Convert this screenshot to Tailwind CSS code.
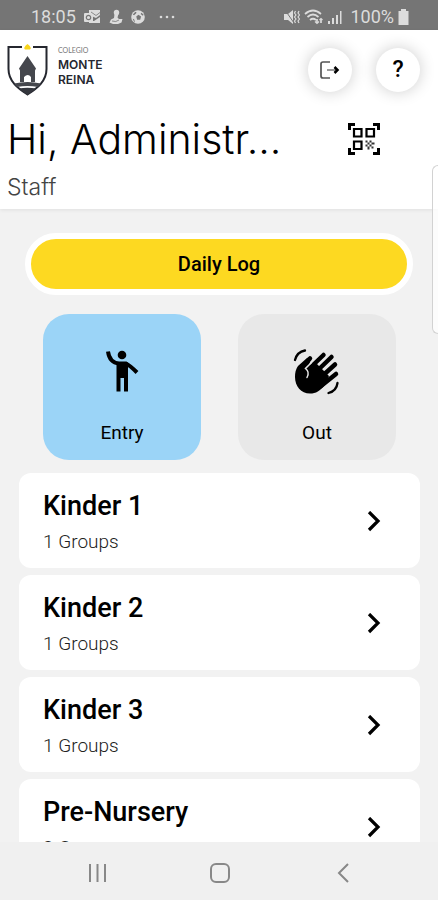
<!DOCTYPE html>
<html lang="en">
<head>
<meta charset="utf-8">
<meta name="viewport" content="width=device-width, initial-scale=1">
<title>Colegio Monte Reina</title>
<script src="https://cdn.jsdelivr.net/npm/@tailwindcss/browser@4"></script>
</head>
<body class="relative flex h-screen flex-col overflow-hidden bg-[#f2f2f2] font-[Roboto,sans-serif] text-black">
  <!-- System status bar -->
  <div class="flex h-[30px] shrink-0 items-center justify-between bg-[#757575] pt-[3px] pr-7 pl-[31px] text-lg leading-6 text-[#dcdcdc]">
    <div class="flex items-center gap-2">
      <span>18:05</span>
      <svg class="h-4 w-[17px]" viewBox="0 0 17 16" fill="currentColor" aria-hidden="true"><path d="M5 1h11v5l-4 3-7-3z"/><path d="M16 8v6H5v-2h5z"/><rect y="4" width="9" height="9" rx="1"/><circle cx="4.500" cy="8.500" r="2.200" fill="none" stroke="#757575" stroke-width="1.200"/><path d="M7 3l5 3.500 4-3" fill="none" stroke="#757575" stroke-width=".8"/></svg>
      <svg class="h-4 w-[14px]" viewBox="0 0 14 16" fill="currentColor" aria-hidden="true"><circle cx="7.500" cy="3.500" r="2.700"/><path d="M5.500 5h4L8.500 8.500 10 10h3.500l-1 3.500L9 15H4l-3.500-1.500L2 10.500 5 9z"/><path d="M3 12q4 1.500 7-1" fill="none" stroke="#757575" stroke-width=".8"/></svg>
      <svg class="size-[14px]" viewBox="0 0 16 16" aria-hidden="true"><circle cx="8" cy="8" r="7.800" fill="currentColor"/><path d="M8.500 5.500l3 2-1 3.500H7L6 7.500zM2 5l3-3 1.500 1-3 3zM12 3l2.500 2.500-1 1L11 4.500zM2 10l1.500.5 1 3-1 0z" fill="#757575"/></svg>
      <svg class="ml-[6px] h-4 w-4" viewBox="0 0 16 16" fill="currentColor" aria-hidden="true"><circle cx="2" cy="8" r="1.300"/><circle cx="8" cy="8" r="1.300"/><circle cx="14" cy="8" r="1.300"/></svg>
    </div>
    <div class="flex items-center gap-1">
      <svg class="h-4 w-4" viewBox="0 0 16 16" fill="currentColor" aria-hidden="true"><path d="M0 5h4l5-4v14l-5-4H0z"/><path d="M1 1l9 13" stroke="#757575" stroke-width="1"/><path d="M11.500 2l-1 2 1.500 2-1.500 2 1.500 2-1.500 2 1 2M15 2l-1 2 1.500 2L14 8l1.500 2-1.500 2 1 2" fill="none" stroke="currentColor" stroke-width="1.200"/></svg>
      <svg class="h-4 w-5" viewBox="0 0 20 16" fill="none" stroke="currentColor" stroke-width="1.700" aria-hidden="true"><path d="M1 5q8-7 16 0M3.500 8q5.500-5 11 0M6 11q3-2.500 6 0"/><path d="M13 10v4M17 14v-4"/><path d="M11 12.500l2 2 2-2M15.500 11l1.500-1.500 1.500 1.500" stroke-width="1.200"/></svg>
      <svg class="h-4 w-[14px]" viewBox="0 0 14 16" fill="currentColor" aria-hidden="true"><path d="M0 12h2v3H0zM4 9h2v6H4zM8 6h2v9H8zM12 2h1.500v13H12z"/></svg>
      <span class="ml-1">100%</span>
      <svg class="h-4 w-3" viewBox="0 0 12 16" fill="currentColor" aria-hidden="true"><path d="M3 0h5v2h2.500v14H.5V2H3z"/></svg>
    </div>
  </div>

  <header class="shrink-0 bg-white shadow-[0_1px_4px_rgba(0,0,0,0.08)]">
    <div class="flex h-20 items-center justify-between pr-[18px] pl-[7px]">
      <div class="flex items-start gap-[10px]">
        <svg class="h-[53px] w-[41px]" viewBox="0 0 41 53" aria-hidden="true"><path d="M15 3H1.500v22c0 12 9 19 19 25.500C30.500 44 39.500 37 39.500 25V3H26" fill="none" stroke="#25272f" stroke-width="2"/><path d="M20.500 0q5 4 2.500 5.500h-5q-2.500-1.500 2.500-5.500z" fill="#f8d51c"/><path d="M20.500 12l8.500 12.500-1 2V38h-4v-5q-3-4-7 0v5h-4V26.500l-1-2z" fill="#45474d"/><path d="M7 39.500q13.500-3 27 0l-3 3.500q-10.500-2-21 0z" fill="#45474d"/><path d="M11.500 44.500q9-1.500 18 0l-9 6.500z" fill="#34363d"/></svg>
        <div>
          <div class="font-[Lato,sans-serif] text-[7px] leading-[13px] text-[#777]">COLEGIO</div>
          <div class="font-[Inter,sans-serif] text-xs leading-[15px] font-semibold text-[#25272f]">MONTE<br>REINA</div>
        </div>
      </div>
      <div class="flex gap-6">
        <button aria-label="Log out" class="flex size-11 items-center justify-center rounded-full bg-white shadow-[0_0_16px_rgba(0,0,0,0.2)]">
          <svg class="h-[18px] w-5" viewBox="0 0 20 18" fill="none" stroke="#555" stroke-width="1.700" aria-hidden="true"><path d="M10 1H3Q1 1 1 3v12q0 2 2 2h7"/><path d="M7 9h11" stroke="#888"/><path d="M14.500 6L17.500 9l-3 3" stroke="#000" stroke-width="2.500"/></svg>
        </button>
        <button aria-label="Help" class="flex size-11 items-center justify-center rounded-full bg-white text-[23px] font-medium shadow-[0_0_16px_rgba(0,0,0,0.2)]">?</button>
      </div>
    </div>
    <div class="flex items-center pt-[2px] pr-[57px] pl-[7px]">
      <h1 class="min-w-0 flex-1 font-[Inter,sans-serif] text-[41px] leading-[54px] font-light whitespace-nowrap">Hi, Administr...</h1>
      <button aria-label="Scan QR code">
        <svg class="size-[34px]" viewBox="0 0 34 34" fill="none" stroke="#000" aria-hidden="true"><path d="M2.500 8V2.500H8M26 2.500h5.500V8M31.500 26v5.500H26M8 31.500H2.500V26" stroke-width="3"/><path d="M7 7h7.500v7.500H7zM19.500 7H27v7.500h-7.500zM7 19.500h7.500V27H7z" stroke-width="2.200"/><path d="M18.500 18.500h2v2h-2zM22.500 18.500h2v2h-2zM20.500 20.500h2v2h-2zM24.500 20.500h3v2h-3zM18.500 22.500h2v2h-2zM22.500 22.500h2v2h-2zM20.500 24.500h2v3h-2zM24.500 24.500h2v2h-2z" fill="#333" stroke="none"/></svg>
      </button>
    </div>
    <p class="pt-[9px] pb-[10px] pl-[7px] font-[Inter,sans-serif] text-[23px] leading-6 font-light text-[#444]">Staff</p>
  </header>

  <main class="min-h-0 flex-1 overflow-hidden">
    <div class="pt-6 pr-[25px] pl-[25px]">
      <button class="h-[62px] w-full rounded-full border-[6px] border-white bg-[#fdd921] text-xl font-medium">Daily Log</button>
    </div>
    <div class="grid grid-cols-2 gap-[37px] pt-[19px] pr-[42px] pb-[13px] pl-[43px]">
      <button class="flex h-[146px] flex-col items-center rounded-[26px] bg-[#9bd4f7] pt-[34px] text-[19px] leading-6">
        <svg class="size-12" viewBox="0 0 48 48" aria-hidden="true"><circle cx="24" cy="7" r="4.300"/><path d="M10 3.500C11 11 15 15 21 15.500h7q4 2 11 9" fill="none" stroke="#000" stroke-width="4"/><path d="M18.500 14.500h11.500v29h-4V30h-3.500v13.500h-4z"/></svg>
        <span class="mt-[25px]">Entry</span>
      </button>
      <button class="flex h-[146px] flex-col items-center rounded-[26px] bg-[#e8e8e8] pt-[34px] text-[19px] leading-6">
        <svg class="size-12" viewBox="0 0 48 48" fill="none" stroke="#000" stroke-linecap="round" aria-hidden="true"><path d="M5 18l9-8q4-2 4 1l-2 6 8-1 12 12-4 9c-5 6-9 8.500-15 8.500C8 45.500 2 38 2 29q0-7 3-11z" fill="#000" stroke="none"/><path d="M17 10.500L8 20M30.500 7L18 19M38.500 9L22 25M42 16.500L26 31M43 26L28 38" stroke-width="4.500"/><path d="M18 15l-5.500 5.500q4.500 3.500 1.500 9" stroke="#e8e8e8" stroke-width="1.500"/><path d="M2 12Q4 4 12 2.500M35.500 45q8-2 9-10" stroke-width="2.300"/></svg>
        <span class="mt-[25px]">Out</span>
      </button>
    </div>
    <ul class="flex flex-col gap-[7px] pr-[18px] pl-[19px]">
      <li><a href="#kinder-1" class="flex items-center justify-between rounded-xl bg-white pt-4 pr-[38px] pb-[14px] pl-6">
        <div><h2 class="text-[27px] leading-[34px] font-medium">Kinder 1</h2><p class="mt-[7px] text-[19px] leading-6 font-light text-[#222]">1 Groups</p></div>
        <svg class="h-[22px] w-4" viewBox="0 0 16 22" fill="none" stroke="#000" stroke-width="3.200" aria-hidden="true"><path d="M3 1l9 9-9 9"/></svg>
      </a></li>
      <li><a href="#kinder-2" class="flex items-center justify-between rounded-xl bg-white pt-4 pr-[38px] pb-[14px] pl-6">
        <div><h2 class="text-[27px] leading-[34px] font-medium">Kinder 2</h2><p class="mt-[7px] text-[19px] leading-6 font-light text-[#222]">1 Groups</p></div>
        <svg class="h-[22px] w-4" viewBox="0 0 16 22" fill="none" stroke="#000" stroke-width="3.200" aria-hidden="true"><path d="M3 1l9 9-9 9"/></svg>
      </a></li>
      <li><a href="#kinder-3" class="flex items-center justify-between rounded-xl bg-white pt-4 pr-[38px] pb-[14px] pl-6">
        <div><h2 class="text-[27px] leading-[34px] font-medium">Kinder 3</h2><p class="mt-[7px] text-[19px] leading-6 font-light text-[#222]">1 Groups</p></div>
        <svg class="h-[22px] w-4" viewBox="0 0 16 22" fill="none" stroke="#000" stroke-width="3.200" aria-hidden="true"><path d="M3 1l9 9-9 9"/></svg>
      </a></li>
      <li><a href="#pre-nursery" class="flex items-center justify-between rounded-xl bg-white pt-4 pr-[38px] pb-[14px] pl-6">
        <div><h2 class="text-[27px] leading-[34px] font-medium">Pre-Nursery</h2><p class="mt-[7px] text-[19px] leading-6 font-light text-[#222]">2 Groups</p></div>
        <svg class="h-[22px] w-4" viewBox="0 0 16 22" fill="none" stroke="#000" stroke-width="3.200" aria-hidden="true"><path d="M3 1l9 9-9 9"/></svg>
      </a></li>
    </ul>
  </main>

  <!-- Edge panel handle -->
  <div class="absolute top-[165px] right-0 h-[169px] w-[6px] rounded-l-lg border border-r-0 border-[#d2d2d2] bg-white/80"></div>

  <!-- System navigation -->
  <nav class="flex h-[58px] shrink-0 items-center justify-between bg-[#f0f0f0] pt-[3px] pr-[84px] pl-[86px] text-[#888]">
    <button aria-label="Recent apps"><svg class="size-[22px]" viewBox="0 0 22 22" fill="none" stroke="currentColor" stroke-width="2" aria-hidden="true"><path d="M4 2v18M11.500 2v18M19 2v18"/></svg></button>
    <button aria-label="Home"><svg class="size-[22px]" viewBox="0 0 22 22" fill="none" stroke="currentColor" stroke-width="2" aria-hidden="true"><rect x="2" y="2" width="18" height="18" rx="5"/></svg></button>
    <button aria-label="Back"><svg class="size-[22px]" viewBox="0 0 22 22" fill="none" stroke="currentColor" stroke-width="2" aria-hidden="true"><path d="M16 2l-9 9 9 9"/></svg></button>
  </nav>
</body>
</html>
